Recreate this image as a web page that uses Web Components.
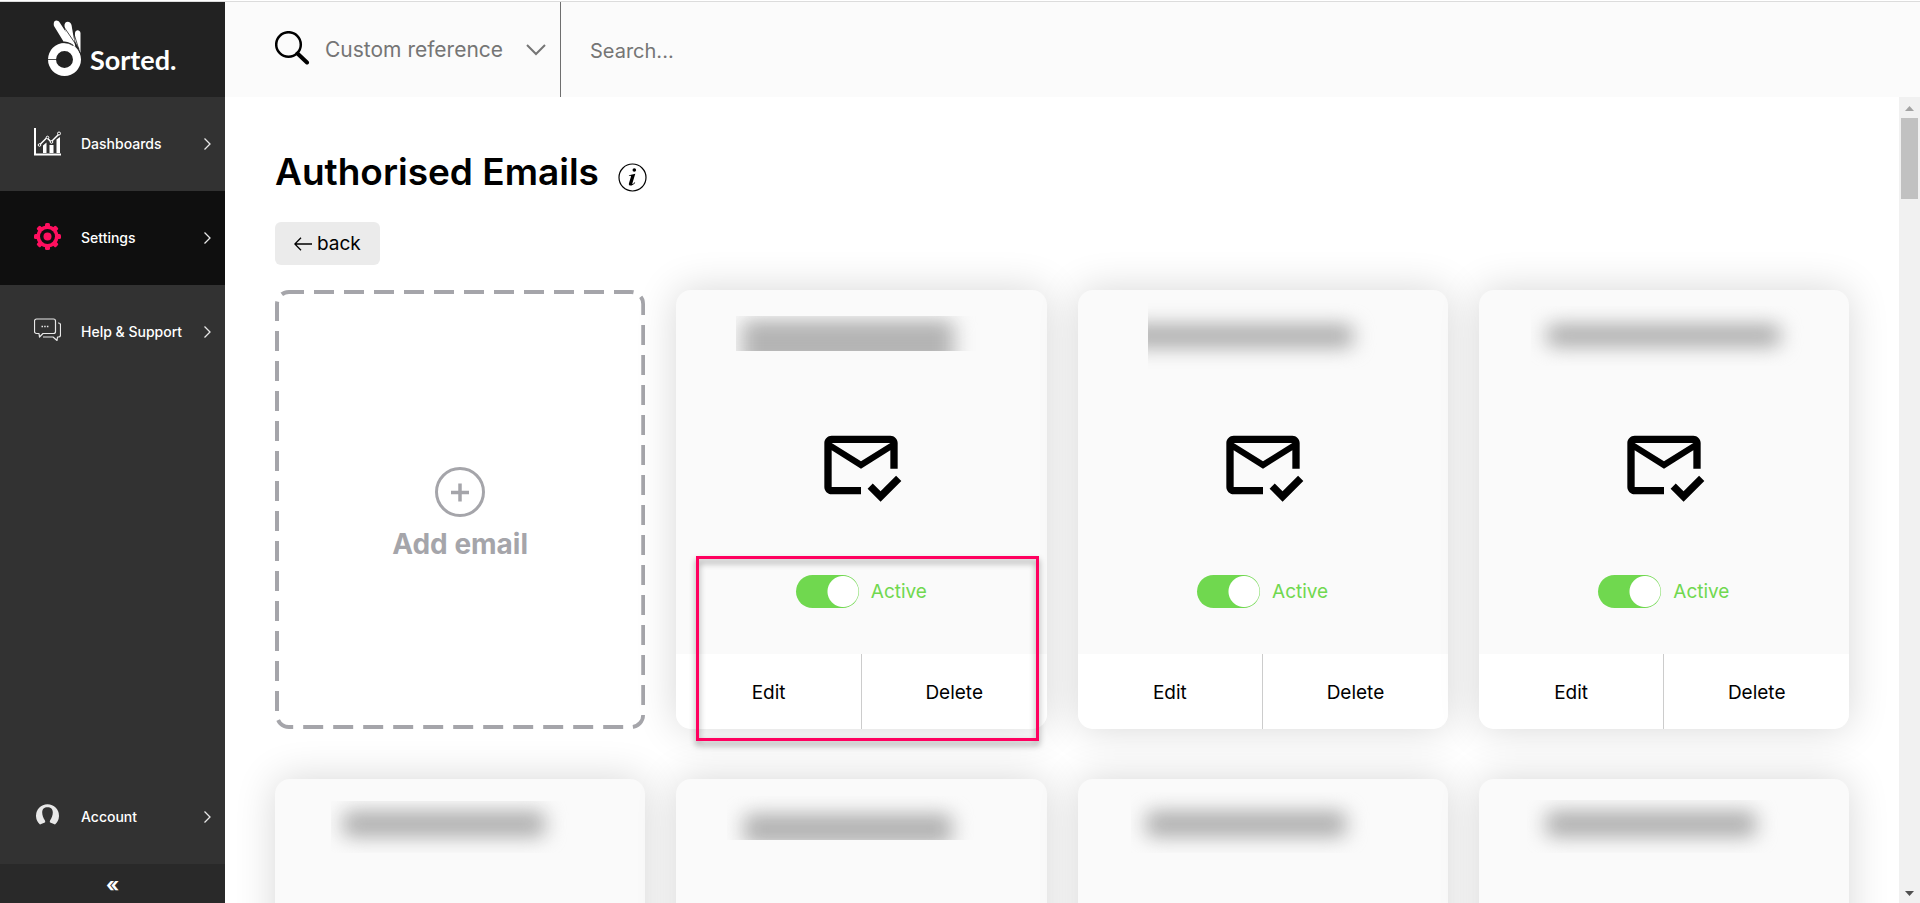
<!DOCTYPE html>
<html lang="en">
<head>
<meta charset="utf-8">
<title>Authorised Emails</title>
<style>
  html, body { height: 100%; margin: 0; background: #fff; }
  body { font-family: Inter, "Liberation Sans", sans-serif; color: #000; overflow: hidden; }
</style>
</head>
<body>
<app-shell>
  <side-bar slot="sidebar">
    <nav-item label="Dashboards" icon="chart"></nav-item>
    <nav-item label="Settings" icon="gear" active></nav-item>
    <nav-item label="Help &amp; Support" icon="chat"></nav-item>
    <nav-item slot="bottom" label="Account" icon="person"></nav-item>
  </side-bar>
  <search-header slot="header"></search-header>
  <page-title>Authorised Emails</page-title>
  <back-button>back</back-button>
  <card-grid>
    <add-card>Add email</add-card>
    <email-card highlighted clip="60 26 250 35" bar="66 30 212 46"></email-card>
    <email-card clip="70 13 250 66" bar="50 33 225 26"></email-card>
    <email-card clip="52 16 280 60" bar="68 33 233 25"></email-card>
    <email-card clip="56 22 245 52" bar="68 31 202 28"></email-card>
    <email-card clip="51 17 275 44" bar="68 34 208 32"></email-card>
    <email-card clip="53 13 255 61" bar="68 31 200 28"></email-card>
    <email-card clip="48 21 265 53" bar="67 31 210 28"></email-card>
  </card-grid>
</app-shell>

<script>
const ICONS = {
  chart: `<svg width="27" height="28" viewBox="0 0 27 28" fill="none" stroke="#fff"><path d="M1 0v26.500h26" stroke-width="2"/><path d="M5.500 17L13 9.500l4 4.500L25 6" stroke-width="1.500"/><g fill="#323232" stroke-width="1"><circle cx="5.500" cy="17" r="1.300"/><circle cx="13.500" cy="9.500" r="1.300"/><circle cx="17.500" cy="14" r="1.300"/><circle cx="25" cy="5.500" r="1.500"/></g><path d="M9 17.500l3.500-3v10.500H9zM15.500 17h4v8h-4zM22.500 11.500l3.500-2.500v16h-3.500z" fill="#fff" stroke="none"/></svg>`,
  gear: `<svg width="27" height="27" viewBox="-13.500 -13.500 27 27"><g fill="#ff0f5f"><circle r="11"/><rect x="-2.500" y="-13.500" width="5" height="27" rx="1.500"/><rect x="-13.500" y="-2.500" width="27" height="5" rx="1.500"/><g transform="rotate(45)"><rect x="-2.500" y="-13.500" width="5" height="27" rx="1.500"/><rect x="-13.500" y="-2.500" width="27" height="5" rx="1.500"/></g></g><circle r="7.500" fill="#0f0f0f"/><circle r="4" fill="#ff0f5f"/></svg>`,
  chat: `<svg width="27" height="24" viewBox="0 0 27 24" fill="none" stroke="#e8e8e8" stroke-width="1.200" stroke-linejoin="round"><path d="M2.500 1h17a2 2 0 0 1 2 2v10.500a2 2 0 0 1-2 2H9L5.500 19l-.5-3.500H2.500a2 2 0 0 1-2-2V3a2 2 0 0 1 2-2z"/><path d="M24 5h.5a2 2 0 0 1 2 2v10a2 2 0 0 1-2 2H23.500l-.5 3.500L19 19H9"/><path d="M7.500 8.500h7" stroke-dasharray="1.500 1.200" stroke-width="1.500"/></svg>`,
  person: `<svg width="27" height="22" viewBox="0 0 27 22"><path d="M6 20.500A11.500 11.500 0 1 1 21 20.500L16.200 18.500c-.6-.4-.5-1.200 0-2.200C17.700 14 18.800 11 18.800 8.500 18.800 5 16.800 3.200 13.500 3.200S8.200 5 8.200 8.500c0 2.500 1.100 5.500 2.600 7.800.5 1 .6 1.800 0 2.200z" fill="#e8e8e8"/></svg>`
};

/* Registers an element whose open shadow root is cloned from a template. */
function define(name, html, setup) {
  const template = document.createElement('template');
  template.innerHTML = html;
  customElements.define(name, class extends HTMLElement {
    constructor() {
      super();
      this.attachShadow({ mode: 'open' }).append(template.content.cloneNode(true));
    }
    connectedCallback() { if (setup) setup(this, this.shadowRoot); }
  });
}

define('app-shell', `
<style>
  :host { display: grid; grid-template-columns: 225px minmax(0, 1fr); grid-template-rows: 1px 95px minmax(0, 1fr); height: 100vh; box-sizing: border-box; padding-top: 1px; }
  :host::before { content: ""; grid-column: 1 / -1; grid-row: 1; background: #dcdcdc; }
  .side { grid-column: 1; grid-row: 2 / 4; display: grid; min-height: 0; }
  .head { grid-column: 2; grid-row: 2; display: grid; }
  .body { grid-column: 2; grid-row: 3; display: grid; grid-template-columns: minmax(0, 1fr) 21px; min-height: 0; }
  main { overflow-y: auto; scrollbar-width: none; padding: 53px 50px 50px; }
</style>
<div class="side"><slot name="sidebar"></slot></div>
<div class="head"><slot name="header"></slot></div>
<div class="body"><main><slot></slot></main><scroll-track></scroll-track></div>`);

define('scroll-track', `
<style>
  :host { display: flex; flex-direction: column; align-items: center; background: #f1f1f1; }
  svg { flex: none; }
  .thumb { width: 17px; height: 81px; background: #c1c1c1; margin-bottom: auto; }
</style>
<svg width="21" height="21"><path d="M6 14l4.500-5 4.500 5z" fill="#a3a3a3"/></svg>
<div class="thumb"></div>
<svg width="21" height="21"><path d="M6 9l4.500 5 4.500-5z" fill="#505050"/></svg>`);

define('side-bar', `
<style>
  :host { display: flex; flex-direction: column; background: #323232; color: #fff; min-height: 0; }
  .logo { display: flex; gap: 9px; height: 95px; padding-left: 48px; background: #222; font: 700 27px/32px Lato, sans-serif; text-decoration: none; color: #fff; }
  .logo svg { margin-top: 18px; }
  .logo span { margin-top: 42px; }
  nav { display: flex; flex-direction: column; flex: 1; }
  .bottom { margin-top: auto; }
  button { height: 39px; padding: 2px 0 0; border: 0; background: #292929; color: #fff; font: 700 20px/24px Inter, sans-serif; }
</style>
<a class="logo" href="#"><svg width="33" height="57" viewBox="0 0 33 57"><g fill="#fff"><path d="M6 6C4.500 0 9.500 -1 12 3L27 26C22 22 19 22 15.500 21.500z"/><path d="M16.500 6C16 1 22 0 23.500 5L27.500 28 18 15z"/><path d="M27 13c.5-4 5-3.500 5.500 0V33L26.500 20z"/><path fill-rule="evenodd" d="M16.500 23a16.500 16.500 0 1 1 0 33 16.500 16.500 0 0 1 0-33zm0 8a8.500 8.500 0 1 0 0 17 8.500 8.500 0 0 0 0-17z"/></g><g stroke="#222" stroke-width=".8" fill="none"><path d="M16 7l15 22M26 14l6 19M15 22.500q6 0 10 3M0 39.500h8"/></g></svg><span>Sorted.</span></a>
<nav><slot></slot><div class="bottom"><slot name="bottom"></slot></div></nav>
<button type="button">«</button>`);

define('nav-item', `
<style>
  :host { display: block; }
  :host([active]) { background: #0f0f0f; }
  a { display: grid; grid-template-columns: 27px 1fr 7px; align-items: center; column-gap: 20px; height: 94px; padding: 0 14px 0 34px; color: #fff; text-decoration: none; font-size: 14px; line-height: 20px; font-weight: 500; white-space: nowrap; box-sizing: border-box; }
  .icon { display: grid; padding-bottom: 4px; }
</style>
<a href="#"><span class="icon"></span><span class="label"></span><svg width="7" height="12" viewBox="0 0 7 12" fill="none" stroke="#e8e8e8" stroke-width="1.300"><path d="M.5.5L6 6 .5 11.500"/></svg></a>`,
(el, root) => {
  root.querySelector('.icon').innerHTML = ICONS[el.getAttribute('icon')];
  root.querySelector('.label').textContent = el.getAttribute('label');
});

define('search-header', `
<style>
  :host { display: grid; grid-template-columns: 335px 1px minmax(0, 1fr); background: #fbfbfb; }
  .kind { display: grid; grid-template-columns: 35px 1fr 20px; column-gap: 15px; align-items: center; padding: 0 14px 0 50px; }
  .kind svg:first-child { margin-bottom: 4px; }
  select, input { appearance: none; border: 0; outline: 0; margin: 0; padding: 0; background: none; font-family: inherit; color: #757575; height: 95px; width: 100%; }
  select { font-size: 21px; grid-column: 2 / 4; grid-row: 1; }
  .chevron { grid-column: 3; grid-row: 1; pointer-events: none; }
  i { background: #6e6e6e; }
  .query { padding-left: 29px; }
  input { font-size: 20px; padding-top: 2px; box-sizing: border-box; }
  input::placeholder { color: #757575; opacity: 1; }
</style>
<div class="kind"><svg width="35" height="34" viewBox="0 0 35 34" fill="none" stroke="#000"><circle cx="13.500" cy="13.500" r="12.300" stroke-width="2.500"/><path d="M22.500 22.500l9.500 9" stroke-width="4" stroke-linecap="round"/></svg>
<select aria-label="Search by"><option>Custom reference</option></select>
<svg class="chevron" width="20" height="12" viewBox="0 0 20 12" fill="none" stroke="#757575" stroke-width="2"><path d="M1 1l9 9 9-9"/></svg></div>
<i></i>
<div class="query"><input type="search" aria-label="Search" placeholder="Search..."></div>`);

define('page-title', `
<style>
  :host { display: flex; gap: 19px; align-items: center; }
  h1 { margin: 0; font-size: 37px; line-height: 44px; font-weight: 600; }
  svg { margin-top: 10px; }
</style>
<h1><slot></slot></h1>
<svg width="29" height="29" viewBox="0 0 29 29"><circle cx="14.500" cy="14.500" r="13.500" fill="none" stroke="#000" stroke-width="1.200"/><circle cx="16.300" cy="7" r="1.800"/><path d="M11 12.200l6.300-1.400-2.900 9.500c-.3 1.200.3 1.100 2.300-1.100l.5.500c-2.300 3.200-7 4-6.300.8l2.100-7c.2-.8-.6-.7-2.100-.5z"/></svg>`);

define('back-button', `
<style>
  :host { display: flex; margin: 28px 0 25px; }
  button { display: flex; align-items: center; gap: 5px; height: 43px; padding: 0 19px; border: 0; border-radius: 6px; background: #ebebeb; font: 400 19px/24px Inter, sans-serif; color: #000; }
</style>
<button type="button"><svg width="18" height="14" viewBox="0 0 18 14" fill="none" stroke="#000" stroke-width="1.300"><path d="M18 7H.8M7 .8L.8 7 7 13.200"/></svg><slot></slot></button>`);

define('card-grid', `
<style>
  :host { display: grid; grid-template-columns: repeat(4, minmax(0, 1fr)); gap: 50px 31px; }
</style>
<slot></slot>`);

define('add-card', `
<style>
  :host { display: grid; height: 439px; }
  button { display: grid; grid-template: minmax(0, 1fr) / minmax(0, 1fr); padding: 0; border: 0; border-radius: 14px; background: #fff; overflow: hidden; color: #a5a5aa; font: 700 28px/34px Inter, sans-serif; }
  .frame { grid-area: 1 / 1; width: 100%; height: 100%; }
  .content { grid-area: 1 / 1; align-self: center; display: flex; flex-direction: column; align-items: center; gap: 10px; padding-top: 8px; }
</style>
<button type="button"><svg class="frame" fill="none"><rect width="100%" height="100%" rx="14" stroke="#a5a5aa" stroke-width="8" stroke-dasharray="20 10" stroke-dashoffset="5"/></svg>
<span class="content"><svg width="50" height="50" viewBox="0 0 50 50" fill="none" stroke="#a5a5aa" stroke-width="3"><circle cx="25" cy="25" r="23.500"/><path d="M16 25.500h18M25 16.500v18" stroke-width="3.500"/></svg><span><slot></slot></span></span></button>`);

define('email-card', `
<style>
  :host { display: flex; flex-direction: column; position: relative; height: 439px; border-radius: 15px; background: #fafafa; box-shadow: 0 0 40px rgba(0, 0, 0, .16); }
  .body { flex: 1; display: flex; flex-direction: column; align-items: center; }
  .name { width: 100%; height: 90px; margin-bottom: 41px; }
  label { display: flex; align-items: center; gap: 12px; margin-top: 66px; color: #70d84f; font-size: 19px; line-height: 33px; }
  input { appearance: none; width: 63px; height: 33px; margin: 0; border-radius: 17px; background: radial-gradient(circle at 47px 50%, #fff 15px, #70d84f 16px); }
  .actions { display: grid; grid-template-columns: 1fr 1px 1fr; height: 75px; border-radius: 0 0 15px 15px; overflow: hidden; background: #fff; }
  .actions button { border: 0; padding: 2px 0 0; background: none; font: 400 19px/24px Inter, sans-serif; color: #000; }
  .actions i { background: #ccc; }
  .mark { display: none; position: absolute; inset: 266px 8px -12px 20px; border: 3px solid #ff005f; filter: drop-shadow(0 4px 3px rgba(0, 0, 0, .4)); pointer-events: none; z-index: 1; }
  :host([highlighted]) .mark { display: block; }
</style>
<div class="body">
  <svg class="name"><defs><clipPath id="clip"><rect class="clip"/></clipPath><filter id="soft" x="-40" y="-40" width="460" height="180" filterUnits="userSpaceOnUse" color-interpolation-filters="sRGB"><feGaussianBlur stdDeviation="10 9"/></filter></defs><g clip-path="url(#clip)"><rect class="bar" rx="6" fill="#b4b4b4" filter="url(#soft)"/></g></svg>
  <svg width="88" height="88" viewBox="0 0 24 24"><path d="M12 18H4V8l8 5 8-5v5h2V6c0-1.100-.9-2-2-2H4c-1.100 0-2 .9-2 2v12c0 1.100.9 2 2 2h8v-2zm8-12l-8 5-8-5h16zm-2.660 16l-3.540-3.540 1.410-1.410 2.120 2.120 4.240-4.240L23 16.340 17.340 22z"/></svg>
  <label><input type="checkbox" role="switch" checked>Active</label>
</div>
<div class="actions"><button type="button">Edit</button><i></i><button type="button">Delete</button></div>
<div class="mark"></div>`,
(el, root) => {
  for (const part of ['clip', 'bar']) {
    const rect = root.querySelector('rect.' + part);
    el.getAttribute(part).split(' ').forEach((v, i) => rect.setAttribute(['x', 'y', 'width', 'height'][i], v));
  }
});
</script>
</body>
</html>
